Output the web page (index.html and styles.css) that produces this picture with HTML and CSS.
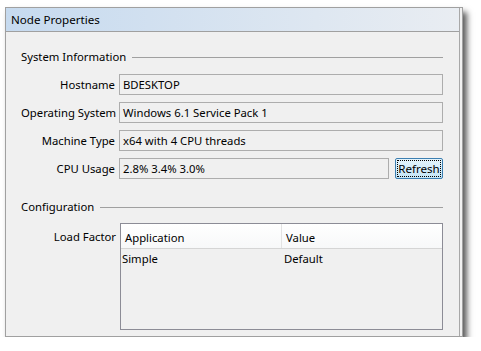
FILE: index.html
```html
<!DOCTYPE html>
<html>
<head>
    <title>Node Properties</title>
    <link rel="stylesheet" href="styles.css">
</head>
<body>
    <div class="window">
        <div class="pane">
            <div class="titlebar">Node Properties</div>

            <div class="content">
                <div class="group-head">
                    <span>System Information</span>
                    <span class="rule"></span>
                </div>

                <div class="form">
                    <label>Hostname</label>
                    <div class="field">BDESKTOP</div>

                    <label>Operating System</label>
                    <div class="field">Windows 6.1 Service Pack 1</div>

                    <label>Machine Type</label>
                    <div class="field">x64 with 4 CPU threads</div>

                    <label>CPU Usage</label>
                    <div class="field-row">
                        <div class="field">2.8% 3.4% 3.0%</div>
                        <button class="btn"><span>Refresh</span></button>
                    </div>
                </div>

                <div class="group-head config-head">
                    <span>Configuration</span>
                    <span class="rule"></span>
                </div>

                <div class="form table-row">
                    <label class="table-label">Load Factor</label>
                    <div class="table">
                        <div class="thead">
                            <div class="th col-app">Application</div>
                            <div class="th col-val">Value</div>
                        </div>
                        <div class="tr">
                            <div class="td col-app">Simple</div>
                            <div class="td col-val">Default</div>
                        </div>
                    </div>
                </div>
            </div>
        </div>
    </div>
</body>
</html>
```

FILE: styles.css
```css
/* Page */
body {
    margin: 0;
    padding: 7px 0 0 5px;
    background-color: #ffffff;
    font-family: 'Noto Sans', 'Open Sans', sans-serif;
    font-size: 11.3px;
    color: #000;
}

/* Window frame with drop shadow */
.window {
    width: 456px;
    height: 328px;
    border: 1px solid #a0a0a0;
    background-color: #f0f0f0;
    box-shadow: 4px 5px 6px rgba(0, 0, 0, 0.65);
}

.pane {
    height: 100%;
    margin-right: 2px;
    border-right: 1px solid #a8a8a8;
}

/* Title bar */
.titlebar {
    height: 23px;
    line-height: 23px;
    padding-left: 5px;
    font-size: 11.6px;
    border-bottom: 1px solid #a0a0a0;
    background: linear-gradient(to right, #c6daef, #e9edf2);
}

.content {
    padding: 17px 0 0 15px;
}

/* Group header with rule */
.group-head {
    display: flex;
    align-items: center;
    width: 422px;
    height: 16px;
    line-height: 16px;
    margin-bottom: 9px;
}

.group-head .rule {
    flex: 1;
    height: 1px;
    margin-left: 6px;
    background-color: #a0a0a0;
}

.config-head {
    margin-top: 20px;
    margin-bottom: 8px;
}

/* Label / field grid */
.form {
    display: grid;
    grid-template-columns: 94px 324px;
    column-gap: 4px;
    row-gap: 7px;
}

.form label {
    text-align: right;
    line-height: 21px;
    white-space: nowrap;
}

.field {
    height: 19px;
    line-height: 19px;
    padding: 0 3px;
    border: 1px solid #adadad;
    white-space: nowrap;
    overflow: hidden;
}

.field-row {
    display: flex;
    gap: 6px;
}

.field-row .field {
    width: 262px;
}

/* Refresh button */
.btn {
    width: 48px;
    height: 21px;
    padding: 1px;
    border: 1px solid #3c7fb1;
    border-radius: 2px;
    background: linear-gradient(#e5f4fc, #c4e5f6);
    font-family: inherit;
    font-size: 11.6px;
    color: #000;
}

.btn span {
    display: block;
    height: 15px;
    line-height: 15px;
    border: 1px dotted #000;
}

/* Load factor table */
.table-row {
    grid-template-columns: 95px 323px;
    column-gap: 4px;
}

.table-label {
    padding-top: 6px;
    line-height: 16px !important;
}

.table {
    height: 105px;
    border: 1px solid #8c8c96;
    background-color: #f0f0f0;
}

.thead {
    display: flex;
    height: 24px;
    border-bottom: 1px solid #d5d5d5;
    background: linear-gradient(#ffffff, #f7f8f9);
}

.th {
    line-height: 27px;
    padding-left: 4px;
}

.thead .col-app {
    border-right: 1px solid #e3e3e3;
}

.col-app {
    width: 156px;
}

.tr {
    display: flex;
}

.td {
    line-height: 20px;
    padding-left: 1px;
}

.tr .col-app {
    width: 161px;
}
```
